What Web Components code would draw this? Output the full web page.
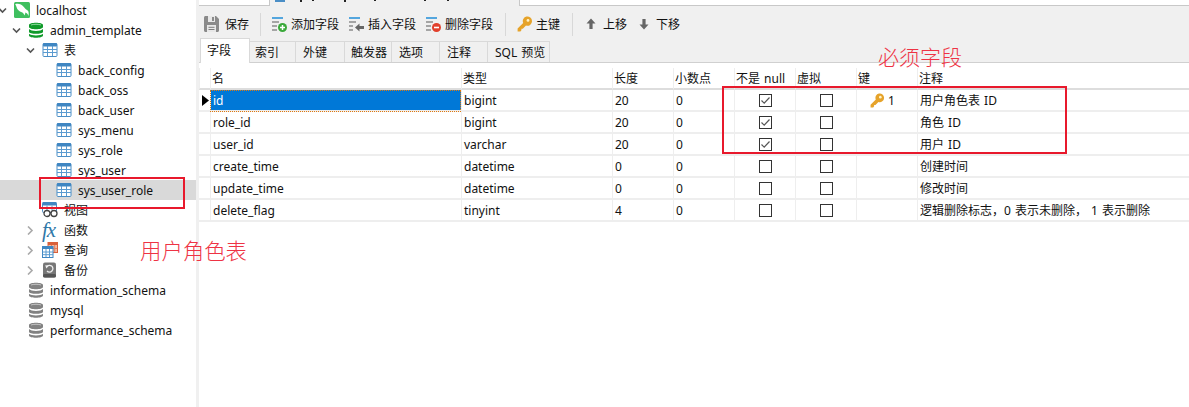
<!DOCTYPE html>
<html lang="zh">
<head>
<meta charset="utf-8">
<title>sys_user_role</title>
<style>
    html, body { margin: 0; height: 100%; background: #fff; overflow: hidden; }
    body {
        font: 12px "Noto Sans", "Noto Sans CJK SC", sans-serif;
        color: #111;
    }
    #app { display: flex; height: 407px; position: relative; }
</style>
</head>
<body>
<div id="app">
    <nav-tree>
        <tree-row depth="0" arrow="open" icon="mysql">localhost</tree-row>
        <tree-row depth="1" arrow="open" icon="db-green">admin_template</tree-row>
        <tree-row depth="2" arrow="open" icon="table">表</tree-row>
        <tree-row depth="3" icon="table">back_config</tree-row>
        <tree-row depth="3" icon="table">back_oss</tree-row>
        <tree-row depth="3" icon="table">back_user</tree-row>
        <tree-row depth="3" icon="table">sys_menu</tree-row>
        <tree-row depth="3" icon="table">sys_role</tree-row>
        <tree-row depth="3" icon="table">sys_user</tree-row>
        <tree-row depth="3" icon="table" selected>sys_user_role</tree-row>
        <tree-row depth="2" icon="view">视图</tree-row>
        <tree-row depth="2" arrow="closed" icon="fx">函数</tree-row>
        <tree-row depth="2" arrow="closed" icon="query">查询</tree-row>
        <tree-row depth="2" arrow="closed" icon="backup">备份</tree-row>
        <tree-row depth="1" icon="db-gray">information_schema</tree-row>
        <tree-row depth="1" icon="db-gray">mysql</tree-row>
        <tree-row depth="1" icon="db-gray">performance_schema</tree-row>
    </nav-tree>
    <main-pane>
        <top-strip></top-strip>
        <tool-bar>
            <tool-button icon="save" gap="5">保存</tool-button>
            <tool-sep before="2" after="1"></tool-sep>
            <tool-button icon="add">添加字段</tool-button>
            <tool-button icon="insert">插入字段</tool-button>
            <tool-button icon="remove">删除字段</tool-button>
            <tool-sep before="3" after="2"></tool-sep>
            <tool-button icon="key" gap="3">主键</tool-button>
            <tool-sep before="3" after="1"></tool-sep>
            <tool-button icon="up">上移</tool-button>
            <tool-button icon="down">下移</tool-button>
        </tool-bar>
        <tab-strip>
            <tab-item active w="50" pad="6">字段</tab-item>
            <tab-item w="46" pad="5">索引</tab-item>
            <tab-item w="49">外键</tab-item>
            <tab-item w="47" pad="6">触发器</tab-item>
            <tab-item w="48">选项</tab-item>
            <tab-item w="48">注释</tab-item>
            <tab-item w="62">SQL 预览</tab-item>
        </tab-strip>
        <field-grid></field-grid>
    </main-pane>
    <red-box style="left:39px;top:177px;width:142px;height:28px"></red-box>
    <red-box style="left:722px;top:86px;width:341px;height:64px"></red-box>
    <red-note style="left:140px;top:234px;font-size:21.4px">用户角色表</red-note>
    <red-note style="left:878px;top:41px">必须字段</red-note>
</div>

<script>
const tableIcon = `
    <rect x="1" y="1.5" width="14" height="13" rx="1" fill="#fff" stroke="#4a8ec6"/>
    <rect x="1" y="1" width="14" height="3.5" rx="1" fill="#3f86c2"/>
    <path d="M1 7.5h14M1 10.5h14M5.5 4v10M10.5 4v10" stroke="#5b9bd0" fill="none"/>`

const dbIcon = (main, light) => `
    <path d="M1 3C1 0 15 0 15 3V5C15 8 1 8 1 5Z" fill="${main}"/>
    <path d="M1 7C3 9.5 13 9.5 15 7V9.8C15 12.5 1 12.5 1 9.8Z" fill="${main}"/>
    <path d="M1 11.7C3 14 13 14 15 11.7V13.5C15 16.5 1 16.5 1 13.5Z" fill="${main}"/>
    <path d="M3 3C5 2 11 2 13 3" stroke="${light}" fill="none"/>`

const ICONS = {
    mysql: `
        <rect width="16" height="16" rx="1.5" y="0" fill="#3fbf5f"/>
        <path d="M1.2 2.2C4 1 7.6 2.2 9.6 4.8C10.8 6.4 12.2 7.6 14 8.8C14.8 10 14.8 11.6 14.5 14C13.6 12 12.6 11 11.4 10.6C11.4 11.6 11 12.6 10.2 13.4C10 11.8 9.2 10.6 7.8 10.2C5.2 9.4 3.2 7.6 2.6 5.2C2.4 4.2 1.8 3 1.2 2.2Z" fill="#fff"/>`,
    "db-green": dbIcon("#109a2a", "#8fdc9f"),
    "db-gray": dbIcon("#828282", "#c4c4c4"),
    table: tableIcon,
    view: `
        <rect x="0.5" y="0.5" width="14" height="10" rx="1" fill="#fff" stroke="#4a8ec6"/>
        <rect x="0.5" y="0" width="14" height="3.5" rx="1" fill="#3f86c2"/>
        <path d="M5 3.5v5M10 3.5v5M.5 6.5h14" stroke="#5b9bd0" fill="none"/>
        <circle cx="5" cy="11.5" r="3" fill="#fff" stroke="#444" stroke-width="1.3"/>
        <circle cx="12" cy="11.5" r="3" fill="#fff" stroke="#444" stroke-width="1.3"/>
        <path d="M8 11h1" stroke="#444"/>`,
    query: `
        <rect x="6" y="0.5" width="9.5" height="10" fill="#f3b9a0" stroke="#d9603a"/>
        <rect x="6" y="0" width="9.5" height="3" fill="#d9603a"/>
        <path d="M9.5 3v7M12.7 3v7M6 6.5h9" stroke="#e0805f"/>
        <rect x="0.5" y="4.5" width="10.5" height="11" fill="#fff" stroke="#3f86c2"/>
        <rect x="0.5" y="4" width="10.5" height="3" fill="#3f86c2"/>
        <path d="M4 7v8M7.5 7v8M.5 10h10.5M.5 12.7h10.5" stroke="#5b9bd0"/>`,
    backup: `
        <rect x="1" y="0.5" width="13" height="15" rx="2" fill="#777"/>
        <rect x="1" y="12" width="13" height="3.5" rx="1.5" fill="#555"/>
        <path d="M4.8 4.6A3.4 3.4 0 1 1 5 9" stroke="#eee" stroke-width="1.3" fill="none"/>
        <path d="M3.2 3.2L7 3.6L4.4 6.4Z" fill="#eee"/>`,
    save: `
        <path d="M0 1.5C0 .7.7 0 1.5 0H12L15 3V14.5C15 15.3 14.3 16 13.5 16H1.5C.7 16 0 15.3 0 14.5Z" fill="#8a8a8a"/>
        <rect x="4" y="0" width="7" height="6" fill="#e8e8e8"/>
        <rect x="8" y="1" width="2" height="4" fill="#8a8a8a"/>
        <rect x="3" y="9" width="9" height="7" fill="#e8e8e8"/>
        <path d="M4.5 11.3h6M4.5 13.5h6" stroke="#7d7d7d"/>`,
    add: `
        <path d="M1 2h11" stroke="#54a6de" stroke-width="2"/>
        <path d="M1 6h7M1 10h5M1 14h5" stroke="#a5a5a5" stroke-width="2"/>
        <circle cx="11.5" cy="11.5" r="4.5" fill="#3aa93a"/>
        <path d="M9 11.5h5M11.5 9v5" stroke="#fff" stroke-width="1.5"/>`,
    insert: `
        <path d="M1 2h11" stroke="#54a6de" stroke-width="2"/>
        <path d="M1 6h7M1 10h4M1 14h4" stroke="#a5a5a5" stroke-width="2"/>
        <path d="M7 11.5L11.5 7.5V10H16V13H11.5V15.5Z" fill="#666"/>`,
    remove: `
        <path d="M1 2h11" stroke="#54a6de" stroke-width="2"/>
        <path d="M1 6h7M1 10h5M1 14h5" stroke="#a5a5a5" stroke-width="2"/>
        <circle cx="11.5" cy="11.5" r="4.5" fill="#e2402c"/>
        <path d="M9 11.5h5" stroke="#fff" stroke-width="1.6"/>`,
    key: `
        <path d="M15 5.2A4.6 4.6 0 1 0 6.2 7L.6 12.6V15.4H3.4L4.4 14.2V12.8H5.8L9 9.6A4.6 4.6 0 0 0 15 5.2Z" fill="#e6a32a"/>
        <circle cx="11" cy="4.4" r="1.4" fill="#fff3c9"/>`,
    up: `<path d="M8 2.5L12.5 7.5H9.6V13H6.4V7.5H3.5Z" fill="#666"/>`,
    down: `<path d="M8 13.5L12.5 8.5H9.6V3H6.4V8.5H3.5Z" fill="#666"/>`
}

function svgIcon(name, size = 16) {
    if (name === "fx") {
        return `<span style="font:italic 21px 'Liberation Serif',serif;color:#2f78a8;letter-spacing:-1px;line-height:16px">fx</span>`
    }
    return `<svg width="${size}" height="${size}" viewBox="0 0 16 16" style="display:block">${ICONS[name]}</svg>`
}

class NavTree extends HTMLElement {
    constructor() {
        super()
        this.attachShadow({ mode: "open" }).innerHTML = /*html*/ `
            <style>
                :host {
                    display: flex;
                    flex-direction: column;
                    flex: 0 0 196px;
                    box-sizing: content-box;
                    border-right: 3px solid #f0f0f0;
                    overflow: hidden;
                }
            </style>
            <slot></slot>
        `
    }
}

class TreeRow extends HTMLElement {
    connectedCallback() {
        const depth = Number(this.getAttribute("depth") || 0)
        const arrow = this.getAttribute("arrow")
        let glyph = ""
        if (arrow === "open") {
            glyph = `<path d="M1 2.5L4.5 6L8 2.5" stroke="#555" stroke-width="1.6" fill="none"/>`
        } else if (arrow === "closed") {
            glyph = `<path d="M2 0.5L6 4.5L2 8.5" stroke="#aaa" stroke-width="1.6" fill="none"/>`
        }
        this.attachShadow({ mode: "open" }).innerHTML = /*html*/ `
            <style>
                :host {
                    display: flex;
                    align-items: center;
                    flex: 0 0 20px;
                    height: 20px;
                    padding-left: ${depth * 14}px;
                    white-space: nowrap;
                }
                :host([selected]) { background: #d9d9d9; }
                .arrow { width: 9px; height: 9px; margin: 0 7px 0 -2px; flex: none; display: block; }
                .icon { width: 16px; height: 16px; flex: none; margin-right: 6px; display: flex; align-items: center; }
            </style>
            <svg class="arrow" viewBox="0 0 9 9">${glyph}</svg>
            <span class="icon">${svgIcon(this.getAttribute("icon"))}</span>
            <slot></slot>
        `
    }
}

class MainPane extends HTMLElement {
    constructor() {
        super()
        this.attachShadow({ mode: "open" }).innerHTML = /*html*/ `
            <style>
                :host { display: flex; flex-direction: column; flex: 1; min-width: 0; }
            </style>
            <slot></slot>
        `
    }
}

class TopStrip extends HTMLElement {
    constructor() {
        super()
        this.attachShadow({ mode: "open" }).innerHTML = /*html*/ `
            <style>
                :host { display: flex; height: 6px; flex: none; }
                .blank { background: #fff; border-bottom: 1px solid #c8c8c8; box-sizing: border-box; }
                .first { width: 71px; border-right: 1px solid #c8c8c8; }
                .rest { flex: 1; }
                .open { width: 250px; background: #f0f0f0; border-right: 1px solid #c8c8c8; box-sizing: border-box; }
                svg { display: block; }
            </style>
            <div class="blank first"></div>
            <div class="open">
                <svg width="249" height="6">
                    <rect x="5" y="0" width="10" height="2" fill="#4a8ec6"/>
                    <path d="M31 0v2M43 0v1M75 0v2M105 0v1M155 0v1M178 0v1" stroke="#222" stroke-width="2"/>
                </svg>
            </div>
            <div class="blank rest"></div>
        `
    }
}

class ToolBar extends HTMLElement {
    constructor() {
        super()
        this.attachShadow({ mode: "open" }).innerHTML = /*html*/ `
            <style>
                :host {
                    display: flex;
                    align-items: center;
                    gap: 9px;
                    height: 32px;
                    box-sizing: border-box;
                    padding: 4px 0 0 5px;
                    background: #f0f0f0;
                    flex: none;
                }
            </style>
            <slot></slot>
        `
    }
}

class ToolButton extends HTMLElement {
    connectedCallback() {
        this.attachShadow({ mode: "open" }).innerHTML = /*html*/ `
            <style>
                :host { display: flex; align-items: center; gap: ${this.getAttribute("gap") || 4}px; white-space: nowrap; }
                .icon { width: 16px; height: 16px; flex: none; }
            </style>
            <span class="icon">${svgIcon(this.getAttribute("icon"))}</span>
            <slot></slot>
        `
    }
}

class ToolSep extends HTMLElement {
    connectedCallback() {
        this.attachShadow({ mode: "open" }).innerHTML = /*html*/ `
            <style>
                :host {
                    display: block;
                    width: 1px;
                    height: 23px;
                    background: #d8d8d8;
                    margin: 0 ${this.getAttribute("after")}px 0 ${this.getAttribute("before")}px;
                }
            </style>
        `
    }
}

class TabStrip extends HTMLElement {
    constructor() {
        super()
        this.attachShadow({ mode: "open" }).innerHTML = /*html*/ `
            <style>
                :host {
                    display: flex;
                    align-items: flex-end;
                    height: 25px;
                    flex: none;
                    padding-left: 1px;
                    background: #f0f0f0;
                    border-bottom: 1px solid #d0d0d0;
                    box-sizing: border-box;
                }
            </style>
            <slot></slot>
        `
    }
}

class TabItem extends HTMLElement {
    connectedCallback() {
        this.attachShadow({ mode: "open" }).innerHTML = /*html*/ `
            <style>
                :host {
                    display: flex;
                    align-items: center;
                    width: ${this.getAttribute("w")}px;
                    height: 21px;
                    box-sizing: border-box;
                    padding-left: ${this.getAttribute("pad") || 7}px;
                    border: 1px solid #d9d9d9;
                    border-width: 1px 1px 0 0;
                    white-space: nowrap;
                    word-spacing: 1px;
                }
                :host([active]) {
                    height: 25px;
                    margin-bottom: -1px;
                    background: #fff;
                    border-left-width: 1px;
                    padding-bottom: 2px;
                }
            </style>
            <slot></slot>
        `
    }
}

class CheckBox extends HTMLElement {
    constructor() {
        super()
        this.attachShadow({ mode: "open" }).innerHTML = /*html*/ `
            <style>
                :host { display: block; width: 13px; height: 13px; }
                svg { display: block; }
            </style>
            <svg width="13" height="13" viewBox="0 0 13 13">
                <rect x=".5" y=".5" width="12" height="12" fill="#fff" stroke="#333"/>
                <path class="tick" d="M2.5 6.5L5.2 9.2L10.5 3.5" stroke="#555" stroke-width="1.2" fill="none"/>
            </svg>
        `
    }
    connectedCallback() {
        if (!this.hasAttribute("checked")) {
            this.shadowRoot.querySelector(".tick").remove()
        }
    }
}

const FIELDS = [
    ["id", "bigint", "20", "0", true, "用户角色表 ID", true],
    ["role_id", "bigint", "20", "0", true, "角色 ID"],
    ["user_id", "varchar", "20", "0", true, "用户 ID"],
    ["create_time", "datetime", "0", "0", false, "创建时间"],
    ["update_time", "datetime", "0", "0", false, "修改时间"],
    ["delete_flag", "tinyint", "4", "0", false, "逻辑删除标志，0 表示未删除， 1 表示删除"]
]

class FieldGrid extends HTMLElement {
    constructor() {
        super()
        this.attachShadow({ mode: "open" })
    }

    connectedCallback() {
        const head = ["", "名", "类型", "长度", "小数点", "不是 null", "虚拟", "键", "注释"]
        const headCells = head.map((t) => `<div class="cell head">${t}</div>`).join("")
        const rows = FIELDS.map((f, i) => /*html*/ `
            <div class="cell mark">${i === 0 ? '<svg width="7" height="11"><path d="M0 0L7 5.5L0 11Z" fill="#000"/></svg>' : ""}</div>
            <div class="cell ${i === 0 ? "current" : ""}">${f[0]}</div>
            <div class="cell">${f[1]}</div>
            <div class="cell">${f[2]}</div>
            <div class="cell">${f[3]}</div>
            <div class="cell center"><check-box ${f[4] ? "checked" : ""}></check-box></div>
            <div class="cell center"><check-box></check-box></div>
            <div class="cell keycell">${f[6] ? svgIcon("key", 15) + "<span>1</span>" : ""}</div>
            <div class="cell">${f[5]}</div>
        `).join("")
        this.shadowRoot.innerHTML = /*html*/ `
            <style>
                :host {
                    display: grid;
                    grid-template-columns: 11px 251px 151px 61px 61px 61px 61px 61px 1fr;
                    grid-template-rows: repeat(7, 22px);
                    margin-top: 5px;
                    word-spacing: 1px;
                }
                .cell {
                    box-sizing: border-box;
                    display: flex;
                    align-items: center;
                    padding-left: 2px;
                    border-left: 1px solid #eee;
                    border-bottom: 2px solid #eee;
                    white-space: nowrap;
                    overflow: hidden;
                }
                .head { border-bottom-color: #ddd; padding-left: 1px; }
                .head:first-child { border-left: 0; }
                .mark { border-left: 0; padding-left: 3px; }
                .center { justify-content: center; padding-left: 0; }
                .keycell { padding-left: 13px; gap: 3px; }
                .current {
                    background: #0078d7;
                    color: #fff;
                    outline: 1px dotted #e07a10;
                    outline-offset: -1px;
                }
            </style>
            ${headCells}
            ${rows}
        `
    }
}

class RedBox extends HTMLElement {
    constructor() {
        super()
        this.attachShadow({ mode: "open" }).innerHTML = /*html*/ `
            <style>
                :host { display: block; position: absolute; border: 2px solid #e8192c; pointer-events: none; }
            </style>
        `
    }
}

class RedNote extends HTMLElement {
    constructor() {
        super()
        this.attachShadow({ mode: "open" }).innerHTML = /*html*/ `
            <style>
                :host {
                    display: block;
                    position: absolute;
                    font: 300 21px "Noto Sans CJK SC", sans-serif;
                    color: #ee3344;
                    white-space: nowrap;
                }
            </style>
            <slot></slot>
        `
    }
}

customElements.define("nav-tree", NavTree)
customElements.define("tree-row", TreeRow)
customElements.define("main-pane", MainPane)
customElements.define("top-strip", TopStrip)
customElements.define("tool-bar", ToolBar)
customElements.define("tool-button", ToolButton)
customElements.define("tool-sep", ToolSep)
customElements.define("tab-strip", TabStrip)
customElements.define("tab-item", TabItem)
customElements.define("check-box", CheckBox)
customElements.define("field-grid", FieldGrid)
customElements.define("red-box", RedBox)
customElements.define("red-note", RedNote)
</script>
</body>
</html>
